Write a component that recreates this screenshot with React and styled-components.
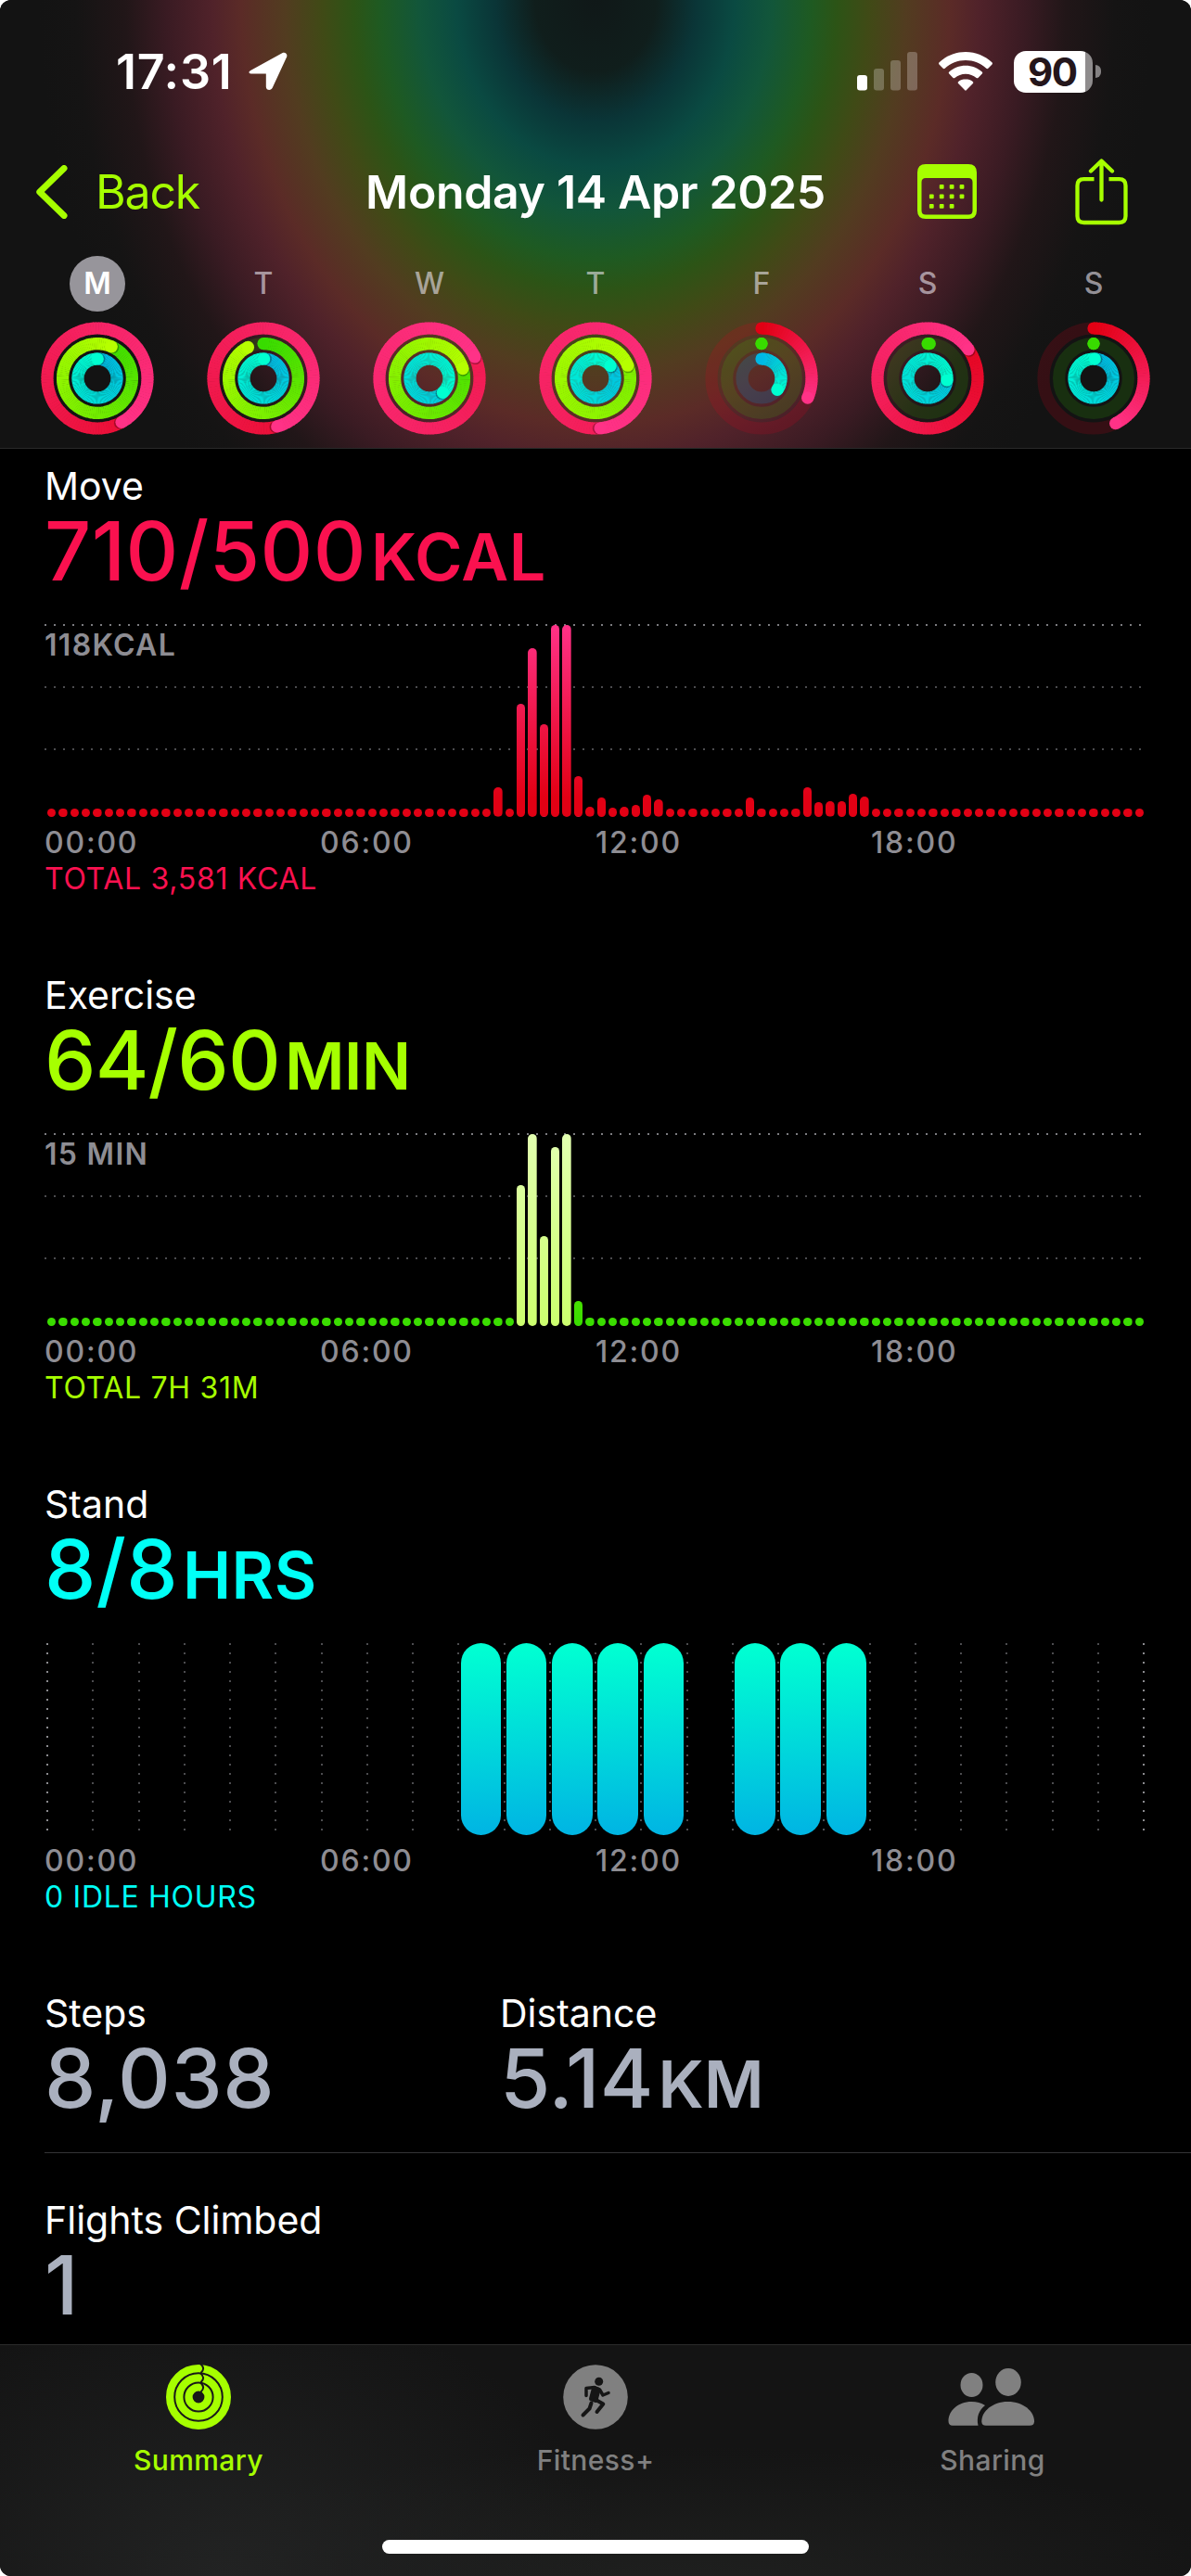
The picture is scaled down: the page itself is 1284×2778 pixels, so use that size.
// src/App.jsx

import React from 'react';
import styled, { createGlobalStyle } from 'styled-components';

const colors = {
  move: '#fa114f',
  exercise: '#a6ff00',
  stand: '#00fff6',
  neutral: '#aab0be',
  axis: '#8e8d93',
  tabInactive: '#808080',
};

// Start and end colour of every activity ring
const ringStyles = [
  { radius: 54, from: [226, 0, 20], to: [255, 50, 135], track: 'rgba(226, 0, 28, 0.17)' },
  { radius: 37.4, from: [56, 220, 0], to: [182, 255, 0], track: 'rgba(60, 220, 0, 0.14)' },
  { radius: 21, from: [0, 184, 228], to: [0, 255, 208], track: 'rgba(0, 150, 220, 0.2)' },
];

const week = [
  { day: 'M', rings: [1.42, 1.067, 1.002], selected: true },
  { day: 'T', rings: [1.456, 0.927, 1.005] },
  { day: 'W', rings: [2.18, 1.205, 1.38] },
  { day: 'T', rings: [2.485, 2.19, 1.14] },
  { day: 'F', rings: [0.314, 0.0001, 0.35] },
  { day: 'S', rings: [1.152, 0.01, 1.265] },
  { day: 'S', rings: [0.428, 0.0001, 1.01] },
];

// Quarter-hour slots with a value; all the others are idle dots
const moveBars = {
  39: 31.7, 41: 122.3, 42: 182, 43: 99.7, 44: 207, 45: 207, 46: 43.7, 47: 10.7,
  48: 21.3, 49: 10.5, 50: 11.3, 51: 13.3, 52: 24.3, 53: 18.7, 61: 20.7,
  66: 32.3, 67: 16.3, 68: 16.6, 69: 17.3, 70: 25.3, 71: 22,
};

const exerciseBars = { 41: 152, 42: 207, 43: 96.7, 44: 193, 45: 207, 46: 27.3 };

const standHours = [9, 10, 11, 12, 13, 15, 16, 17];

const SLOTS = Array.from({ length: 96 }, (_, i) => i);
const HOURS = Array.from({ length: 24 }, (_, i) => i);
const IDLE_HEIGHT = 9.3;

const mix = (from, to, t) =>
  `rgb(${from.map((c, i) => Math.round(c + (to[i] - c) * t)).join(',')})`;

const polar = (radius, deg) => {
  const a = ((deg - 90) * Math.PI) / 180;
  return [radius * Math.cos(a), radius * Math.sin(a)];
};

const Ring = ({ radius, from, to, track, value }) => {
  const total = value * 360;
  const first = Math.max(0, total - 360);
  const steps = Math.ceil((total - first) / 3);
  const [sx, sy] = polar(radius, 0);
  const [ex, ey] = polar(radius, total);
  const [shx, shy] = polar(radius, total + 100 / radius);
  const segments = [];

  for (let i = 0; i < steps; i += 1) {
    const a = first + i * 3;
    const b = Math.min(total, a + 3);
    const [x1, y1] = polar(radius, a);
    const [x2, y2] = polar(radius, Math.min(total, b + 0.6));
    segments.push(
      <path
        key={i}
        d={`M${x1} ${y1}A${radius} ${radius} 0 0 1 ${x2} ${y2}`}
        stroke={mix(from, to, a / total)}
      />
    );
  }

  const half = Math.ceil(steps / 2);

  return (
    <g fill="none" strokeWidth="13.2">
      {value < 1 && <circle r={radius} stroke={track} />}
      {value < 1 && <circle cx={sx} cy={sy} r="6.6" fill={mix(from, to, 0)} stroke="none" />}
      {segments.slice(0, half)}
      {value >= 1 && <circle cx={shx} cy={shy} r="6.5" fill="rgba(0,0,0,0.3)" stroke="none" />}
      {segments.slice(half)}
      <circle cx={ex} cy={ey} r="6.6" fill={mix(from, to, value < 0.02 ? 0 : 1)} stroke="none" />
    </g>
  );
};

const ActivityRings = ({ values }) => (
  <svg width="122" height="122" viewBox="-61 -61 122 122">
    {ringStyles.map((ring, i) => (
      <Ring key={ring.radius} {...ring} value={values[i]} />
    ))}
  </svg>
);

const LocationIcon = () => (
  <svg width="42" height="42" viewBox="0 0 42 42">
    <path
      d="M3.5 19.2 36.2 1.2c3-1.5 6 .8 5 4L25.8 38.600c-1.500 3.600-7 3-7-1.200V23.600H4.500C-.3 23.600-1 21.200 3.500 19.200z"
      fill="#fff"
    />
  </svg>
);

const SignalIcon = () => (
  <svg width="65" height="42" viewBox="0 0 65 42" fill="#fff">
    <rect x="0" y="25" width="11" height="16.500" rx="3" />
    <rect x="18" y="18" width="11" height="23.500" rx="3" opacity=".25" />
    <rect x="36" y="9" width="11" height="32.500" rx="3" opacity=".25" />
    <rect x="54" y="0" width="11" height="41.500" rx="3" opacity=".25" />
  </svg>
);

const WifiIcon = () => (
  <svg width="58" height="42" viewBox="0 0 58 42" fill="#fff">
    <path d="M29 0C18 0 8 4.300.6 11.300c-.7.700-.7 1.500-.1 2.200l4.200 4.300c.6.600 1.300.6 2 0C12.700 12.300 20.500 9.100 29 9.100s16.300 3.200 22.300 8.700c.7.600 1.400.600 2 0l4.200-4.300c.6-.700.6-1.500-.1-2.200C50 4.300 40 0 29 0z" />
    <path d="M29 14.700c-6.800 0-13 2.600-17.700 6.800-.7.600-.7 1.400-.1 2l4.300 4.400c.6.600 1.200.6 1.900.1 3.100-2.700 7.200-4.300 11.600-4.300s8.500 1.600 11.600 4.300c.7.500 1.300.5 1.900-.1l4.300-4.400c.6-.6.6-1.400-.1-2C42 17.300 35.800 14.700 29 14.700z" />
    <path d="M29 29.200c-2.900 0-5.600 1-7.700 2.700-.8.700-.8 1.400-.2 2.100l6.900 7.100c.7.700 1.300.7 2 0l6.900-7.100c.6-.7.6-1.400-.2-2.100-2.100-1.700-4.800-2.700-7.700-2.700z" />
  </svg>
);

const ChevronIcon = () => (
  <svg width="34" height="58" viewBox="0 0 34 58" fill="none">
    <path d="M30 3.500 3.800 29 30 54.500" stroke={colors.exercise} strokeWidth="7" strokeLinecap="round" strokeLinejoin="round" />
  </svg>
);

const CalendarIcon = () => {
  const dots = [
    [1, 0], [2, 0], [3, 0],
    [0, 1], [1, 1], [2, 1], [3, 1],
    [0, 2], [1, 2], [2, 2],
  ];
  return (
    <svg width="64" height="60" viewBox="0 0 64 60" fill={colors.exercise}>
      <path
        fillRule="evenodd"
        d="M9 0h46q9 0 9 9v41q0 9-9 9H9q-9 0-9-9V9q0-9 9-9zM9 15q-4.500 0-4.500 4.500V50q0 4.500 4.500 4.500h46q4.500 0 4.500-4.500V19.500q0-4.500-4.500-4.500z"
      />
      {dots.map(([cx, cy]) => (
        <rect key={`${cx}-${cy}`} x={12.900 + cx * 10.900} y={22 + cy * 10.500} width="4.800" height="4.800" rx="1" />
      ))}
    </svg>
  );
};

const ShareIcon = () => (
  <svg width="57" height="72" viewBox="0 0 57 72" fill="none" stroke={colors.exercise} strokeWidth="4.300" strokeLinecap="round" strokeLinejoin="round">
    <path d="M20.500 22.200H9.500q-7 0-7 7V62q0 7 7 7h38q7 0 7-7V29.200q0-7-7-7h-11" strokeLinecap="butt" />
    <path d="M28.500 44.500V3M17 13.500 28.500 2.500 40 13.500" />
  </svg>
);

const SummaryIcon = () => (
  <svg width="70" height="70" viewBox="-35 -35 70 70" fill="none">
    {[30.900, 20.700, 10.500].map(r => (
      <circle key={r} r={r} stroke={colors.exercise} strokeWidth="8.200" />
    ))}
    {[30.900, 20.700, 10.500].map(r => (
      <path key={r} d={`M2 ${-r - 5}Q8 ${-r} 2.500 ${-r + 5}`} stroke="#181818" strokeWidth="2" />
    ))}
  </svg>
);

const FitnessIcon = () => (
  <svg width="70" height="70" viewBox="-35 -35 70 70" fill="none" stroke="#151515" strokeWidth="4" strokeLinecap="round" strokeLinejoin="round">
    <circle r="34.800" fill={colors.tabInactive} stroke="none" />
    <circle cx="3.700" cy="-16.700" r="4.500" fill="#151515" stroke="none" />
    <path d="M-10 -1.500V-9.500L-1 -10.500 4.500 -8 8 -2 14 -4.500" strokeWidth="3.500" />
    <path d="M-1.500 -9.500 3 -8 0 3.500 -4.500 2z" fill="#151515" strokeWidth="5" />
    <path d="M-.5 2.500 8.300 7.500 1.500 16" />
    <path d="M-4.500 6.500-6.500 12.500-13.500 19.500" />
  </svg>
);

const SharingIcon = () => (
  <svg width="96" height="70" viewBox="0 0 96 70" fill={colors.tabInactive}>
    <ellipse cx="25.500" cy="22" rx="12" ry="13" />
    <ellipse cx="65" cy="19" rx="13.800" ry="15" />
    <path d="M25.500 40C10.500 40 .5 50 .5 61q0 4.700 4.500 4.700h27.500C30.500 56.500 33.500 49 40 44 36 41.300 31 40 25.500 40z" />
    <path d="M64.500 40C48 40 36.300 50.500 36.300 61.200q0 4.500 4.700 4.500h47q5 0 5-4.500C93 50.500 81.500 40 64.500 40z" />
  </svg>
);

/**
 * Chart with one bar for each quarter of an hour
 *
 * @param {string} props.limit - Label of the top grid line
 * @param {Object} props.values - Bar heights by slot
 * @param {string} props.base - Gradient of the normal bars
 * @param {string} props.highlight - Gradient of the tall bars
 */
const DayBarChart = ({ limit, values, base, highlight }) => (
  <BarChart>
    <GridLine $row={1} $strong>{limit}</GridLine>
    <GridLine $row={2} />
    <GridLine $row={3} />
    <Bars>
      {SLOTS.map(slot => {
        const height = values[slot] || IDLE_HEIGHT;
        return (
          <Bar
            key={slot}
            $fill={highlight && height > 60 ? highlight : base}
            style={{ height }}
          />
        );
      })}
    </Bars>
  </BarChart>
);

const StandChart = () => (
  <HourGrid>
    {HOURS.map(hour => (
      <HourCell key={hour} $strong={hour === 0}>
        {standHours.includes(hour) && <StandBar />}
      </HourCell>
    ))}
    <HourEnd />
  </HourGrid>
);

const Metric = ({ label, value, unit, tone, tight, unitTight }) => (
  <MetricBlock>
    <MetricLabel>{label}</MetricLabel>
    <MetricValue $tone={tone} $tight={tight}>
      {value}
      {unit && <Unit $tight={unitTight}>{unit}</Unit>}
    </MetricValue>
  </MetricBlock>
);

const TimeAxis = () => (
  <Axis>
    {['00:00', '06:00', '12:00', '18:00'].map(time => (
      <span key={time}>{time}</span>
    ))}
  </Axis>
);

const App = () => (
  <>
    <GlobalStyle />
    <Screen>
      <Header>
        <StatusBar>
          <StatusGroup $gap="18px">
            <Clock>17:31</Clock>
            <LocationIcon />
          </StatusGroup>
          <StatusGroup $gap="23px">
            <SignalIcon />
            <WifiIcon />
            <Battery>
              <BatteryBody>90</BatteryBody>
              <BatteryTip />
            </Battery>
          </StatusGroup>
        </StatusBar>

        <NavBar>
          <BackButton>
            <ChevronIcon />
            Back
          </BackButton>
          <Title>Monday 14 Apr 2025</Title>
          <NavActions>
            <CalendarIcon />
            <ShareIcon />
          </NavActions>
        </NavBar>

        <Week>
          {week.map(({ day, rings, selected }, i) => (
            <Day key={i}>
              <DayLetter $selected={selected}>{day}</DayLetter>
              <ActivityRings values={rings} />
            </Day>
          ))}
        </Week>
      </Header>

      <Content>
        <Section>
          <Metric label="Move" value="710/500" unit="KCAL" tone={colors.move} tight="0.4px" unitTight="0.5px" />
          <DayBarChart
            limit="118KCAL"
            values={moveBars}
            base="linear-gradient(to top, #e20014 10%, #ff3288)"
          />
          <TimeAxis />
          <Total $tone={colors.move}>TOTAL 3,581 KCAL</Total>
        </Section>

        <Section>
          <Metric label="Exercise" value="64/60" unit="MIN" tone={colors.exercise} tight="-0.8px" unitTight="-0.5px" />
          <DayBarChart
            limit="15 MIN"
            values={exerciseBars}
            base="linear-gradient(to top, #38dc00, #a6ff00)"
            highlight="linear-gradient(to top, #ccff6e, #e2ffb0)"
          />
          <TimeAxis />
          <Total $tone={colors.exercise}>TOTAL 7H 31M</Total>
        </Section>

        <Section>
          <Metric label="Stand" value="8/8" unit="HRS" tone={colors.stand} tight="0.2px" unitTight="0.5px" />
          <StandChart />
          <TimeAxis />
          <Total $tone={colors.stand}>0 IDLE HOURS</Total>
        </Section>

        <StatsRow $divider>
          <Metric label="Steps" value="8,038" tone={colors.neutral} tight="0.6px" />
          <Metric label="Distance" value="5.14" unit="KM" tone={colors.neutral} tight="0" unitTight="0.5px" />
        </StatsRow>
        <StatsRow>
          <Metric label="Flights Climbed" value="1" tone={colors.neutral} />
        </StatsRow>
      </Content>

      <TabBar>
        <Tabs>
          <Tab $active>
            <SummaryIcon />
            Summary
          </Tab>
          <Tab>
            <FitnessIcon />
            Fitness+
          </Tab>
          <Tab>
            <SharingIcon />
            Sharing
          </Tab>
        </Tabs>
        <HomeIndicator />
      </TabBar>
    </Screen>
  </>
);

const GlobalStyle = createGlobalStyle`
  * {
    box-sizing: border-box;
  }

  body {
    margin: 0;
    background: #fff;
    font-family: Inter, 'Liberation Sans', sans-serif;
    -webkit-font-smoothing: antialiased;
  }

  svg {
    display: block;
    flex-shrink: 0;
  }
`;

const Screen = styled.main`
  display: flex;
  flex-direction: column;
  width: 1284px;
  height: 2778px;
  overflow: hidden;
  border-radius: 12px;
  background: #000;
  color: #fff;
`;

const Header = styled.header`
  height: 484px;
  flex-shrink: 0;
  border-bottom: 1px solid #2a2a2a;
  background: radial-gradient(
    ellipse 600px 720px at 642px 0,
    #101818 0,
    #101e1c 65px,
    #0a3537 108px,
    #0a4a42 150px,
    #12563a 190px,
    #1e5a22 232px,
    #2c5416 260px,
    #404a16 295px,
    #523c20 335px,
    #5b2b27 382px,
    #50222a 414px,
    #3a1b23 462px,
    #211618 507px,
    #151414 560px,
    #131313 600px
  );
`;

const StatusBar = styled.div`
  display: flex;
  align-items: center;
  justify-content: space-between;
  height: 154px;
  padding: 0 97px 0 125px;
`;

const StatusGroup = styled.div`
  display: flex;
  align-items: center;
  gap: ${props => props.$gap};
`;

const Clock = styled.span`
  font-size: 52px;
  font-weight: 600;
  letter-spacing: 0.7px;
`;

const Battery = styled.div`
  display: flex;
  align-items: center;
  gap: 3px;
`;

const BatteryBody = styled.div`
  width: 85px;
  height: 45px;
  padding-left: 15px;
  border-radius: 13px;
  background: linear-gradient(to right, #fff 77px, #8f8c8d 77px);
  color: #24161b;
  font-size: 42px;
  font-weight: 700;
  line-height: 45px;
  letter-spacing: -1.5px;
`;

const BatteryTip = styled.div`
  width: 6px;
  height: 14px;
  border-radius: 0 6px 6px 0;
  background: #858283;
`;

const NavBar = styled.nav`
  display: grid;
  grid-template-columns: 1fr auto 1fr;
  align-items: center;
  height: 106px;
  padding: 0 68px 0 39px;
  font-size: 50px;
`;

const BackButton = styled.div`
  display: flex;
  align-items: center;
  gap: 30px;
  color: ${colors.exercise};
  letter-spacing: -1.2px;
`;

const Title = styled.h1`
  margin: 0 0 0 29px;
  font-size: 50px;
  font-weight: 600;
  letter-spacing: -0.35px;
  white-space: nowrap;
`;

const NavActions = styled.div`
  display: flex;
  align-items: center;
  justify-content: flex-end;
  gap: 106px;
`;

const Week = styled.div`
  display: grid;
  grid-template-columns: repeat(7, 179px);
  padding: 16px 15.5px 0;
`;

const Day = styled.div`
  display: flex;
  flex-direction: column;
  align-items: center;
  gap: 11px;
`;

const DayLetter = styled.div`
  width: 60px;
  height: 60px;
  border-radius: 50%;
  background: ${props => (props.$selected ? '#97959b' : 'transparent')};
  color: ${props => (props.$selected ? '#fff' : 'rgba(235, 230, 240, 0.6)')};
  font-size: 32px;
  font-weight: ${props => (props.$selected ? 600 : 500)};
  line-height: 60px;
  text-align: center;
`;

const Content = styled.div`
  flex: 1;
  min-height: 0;
  overflow: hidden;
  padding: 15px 0 0 48px;
`;

const Section = styled.section`
  height: 549px;
`;

const MetricBlock = styled.div`
  height: 140px;
`;

const MetricLabel = styled.div`
  font-size: 41px;
  line-height: 50px;
  white-space: nowrap;
`;

const MetricValue = styled.div`
  color: ${props => props.$tone};
  font-size: 88px;
  font-weight: 500;
  line-height: 90px;
  letter-spacing: ${props => props.$tight || 0};
  white-space: nowrap;
`;

const Unit = styled.span`
  margin-left: 5px;
  font-size: 70px;
  font-weight: 600;
  letter-spacing: ${props => props.$tight || 0};
`;

const BarChart = styled.div`
  display: grid;
  grid-template-rows: 67px 67px 74px;
  width: 1185.3px;
  height: 208px;
  margin-top: 34px;
`;

const GridLine = styled.div`
  grid-area: ${props => props.$row} / 1;
  width: 1182px;
  padding-top: 4px;
  background: repeating-linear-gradient(
      to right,
      ${props => (props.$strong ? '#7c7c80' : '#4c4c4f')} 0 2px,
      transparent 2px 10px
    )
    top / 100% 2px no-repeat;
  color: ${colors.axis};
  font-size: 32px;
  font-weight: 600;
  line-height: 38px;
  letter-spacing: 1.3px;
`;

const Bars = styled.div`
  grid-area: 1 / 1 / 4 / 2;
  display: flex;
  align-items: flex-end;
  gap: 3px;
  padding-left: 3px;
`;

const Bar = styled.div`
  flex: 1;
  border-radius: 5px;
  background: ${props => props.$fill} bottom / 100% 208px;
`;

const HourGrid = styled.div`
  display: flex;
  height: 207px;
  margin-top: 35px;
  padding-left: 2px;
`;

const HourEnd = styled.div`
  width: 2px;
  height: 202px;
  background: repeating-linear-gradient(to bottom, #8a8a8e 0 2px, transparent 2px 10px);
`;

const HourCell = styled.div`
  width: 49.25px;
  padding: 0 2.5px 0 3.4px;
  background: repeating-linear-gradient(
      to bottom,
      ${props => (props.$strong ? '#8a8a8e' : '#4c4c4f')} 0 2px,
      transparent 2px 10px
    )
    left top / 2px 202px no-repeat;
`;

const StandBar = styled.div`
  height: 100%;
  border-radius: 22px;
  background: linear-gradient(176deg, #00ffd2 3%, #00b6e3 97%);
`;

const Axis = styled.div`
  display: grid;
  grid-template-columns: repeat(4, 297px);
  margin-top: 8px;
  color: ${colors.axis};
  font-size: 32px;
  font-weight: 500;
  line-height: 40px;
  letter-spacing: 1.8px;
`;

const Total = styled.div`
  color: ${props => props.$tone};
  font-size: 32px;
  line-height: 38px;
  letter-spacing: 0.7px;
`;

const StatsRow = styled.div`
  display: grid;
  grid-template-columns: 491px 1fr;
  height: ${props => (props.$divider ? '176px' : '150px')};
  margin-bottom: 47px;
  border-bottom: ${props => (props.$divider ? '1px solid #343436' : 'none')};
`;

const TabBar = styled.footer`
  display: flex;
  flex-direction: column;
  align-items: center;
  justify-content: space-between;
  flex-shrink: 0;
  height: 250px;
  padding-bottom: 24px;
  border-top: 1px solid #2a2a2a;
  background: radial-gradient(ellipse 420px 300px at 240px 250px, #222323, transparent),
    radial-gradient(ellipse 620px 160px at 740px 270px, #202120, transparent), #141414;
`;

const Tabs = styled.div`
  display: grid;
  grid-template-columns: repeat(3, 1fr);
  width: 100%;
  padding-top: 21px;
`;

const Tab = styled.div`
  display: flex;
  flex-direction: column;
  align-items: center;
  gap: 15px;
  color: ${props => (props.$active ? colors.exercise : colors.tabInactive)};
  font-size: 30px;
  font-weight: 500;
  line-height: 36px;
  letter-spacing: 0.4px;
`;

const HomeIndicator = styled.div`
  width: 460px;
  height: 15px;
  border-radius: 8px;
  background: #fff;
`;

export default App;
